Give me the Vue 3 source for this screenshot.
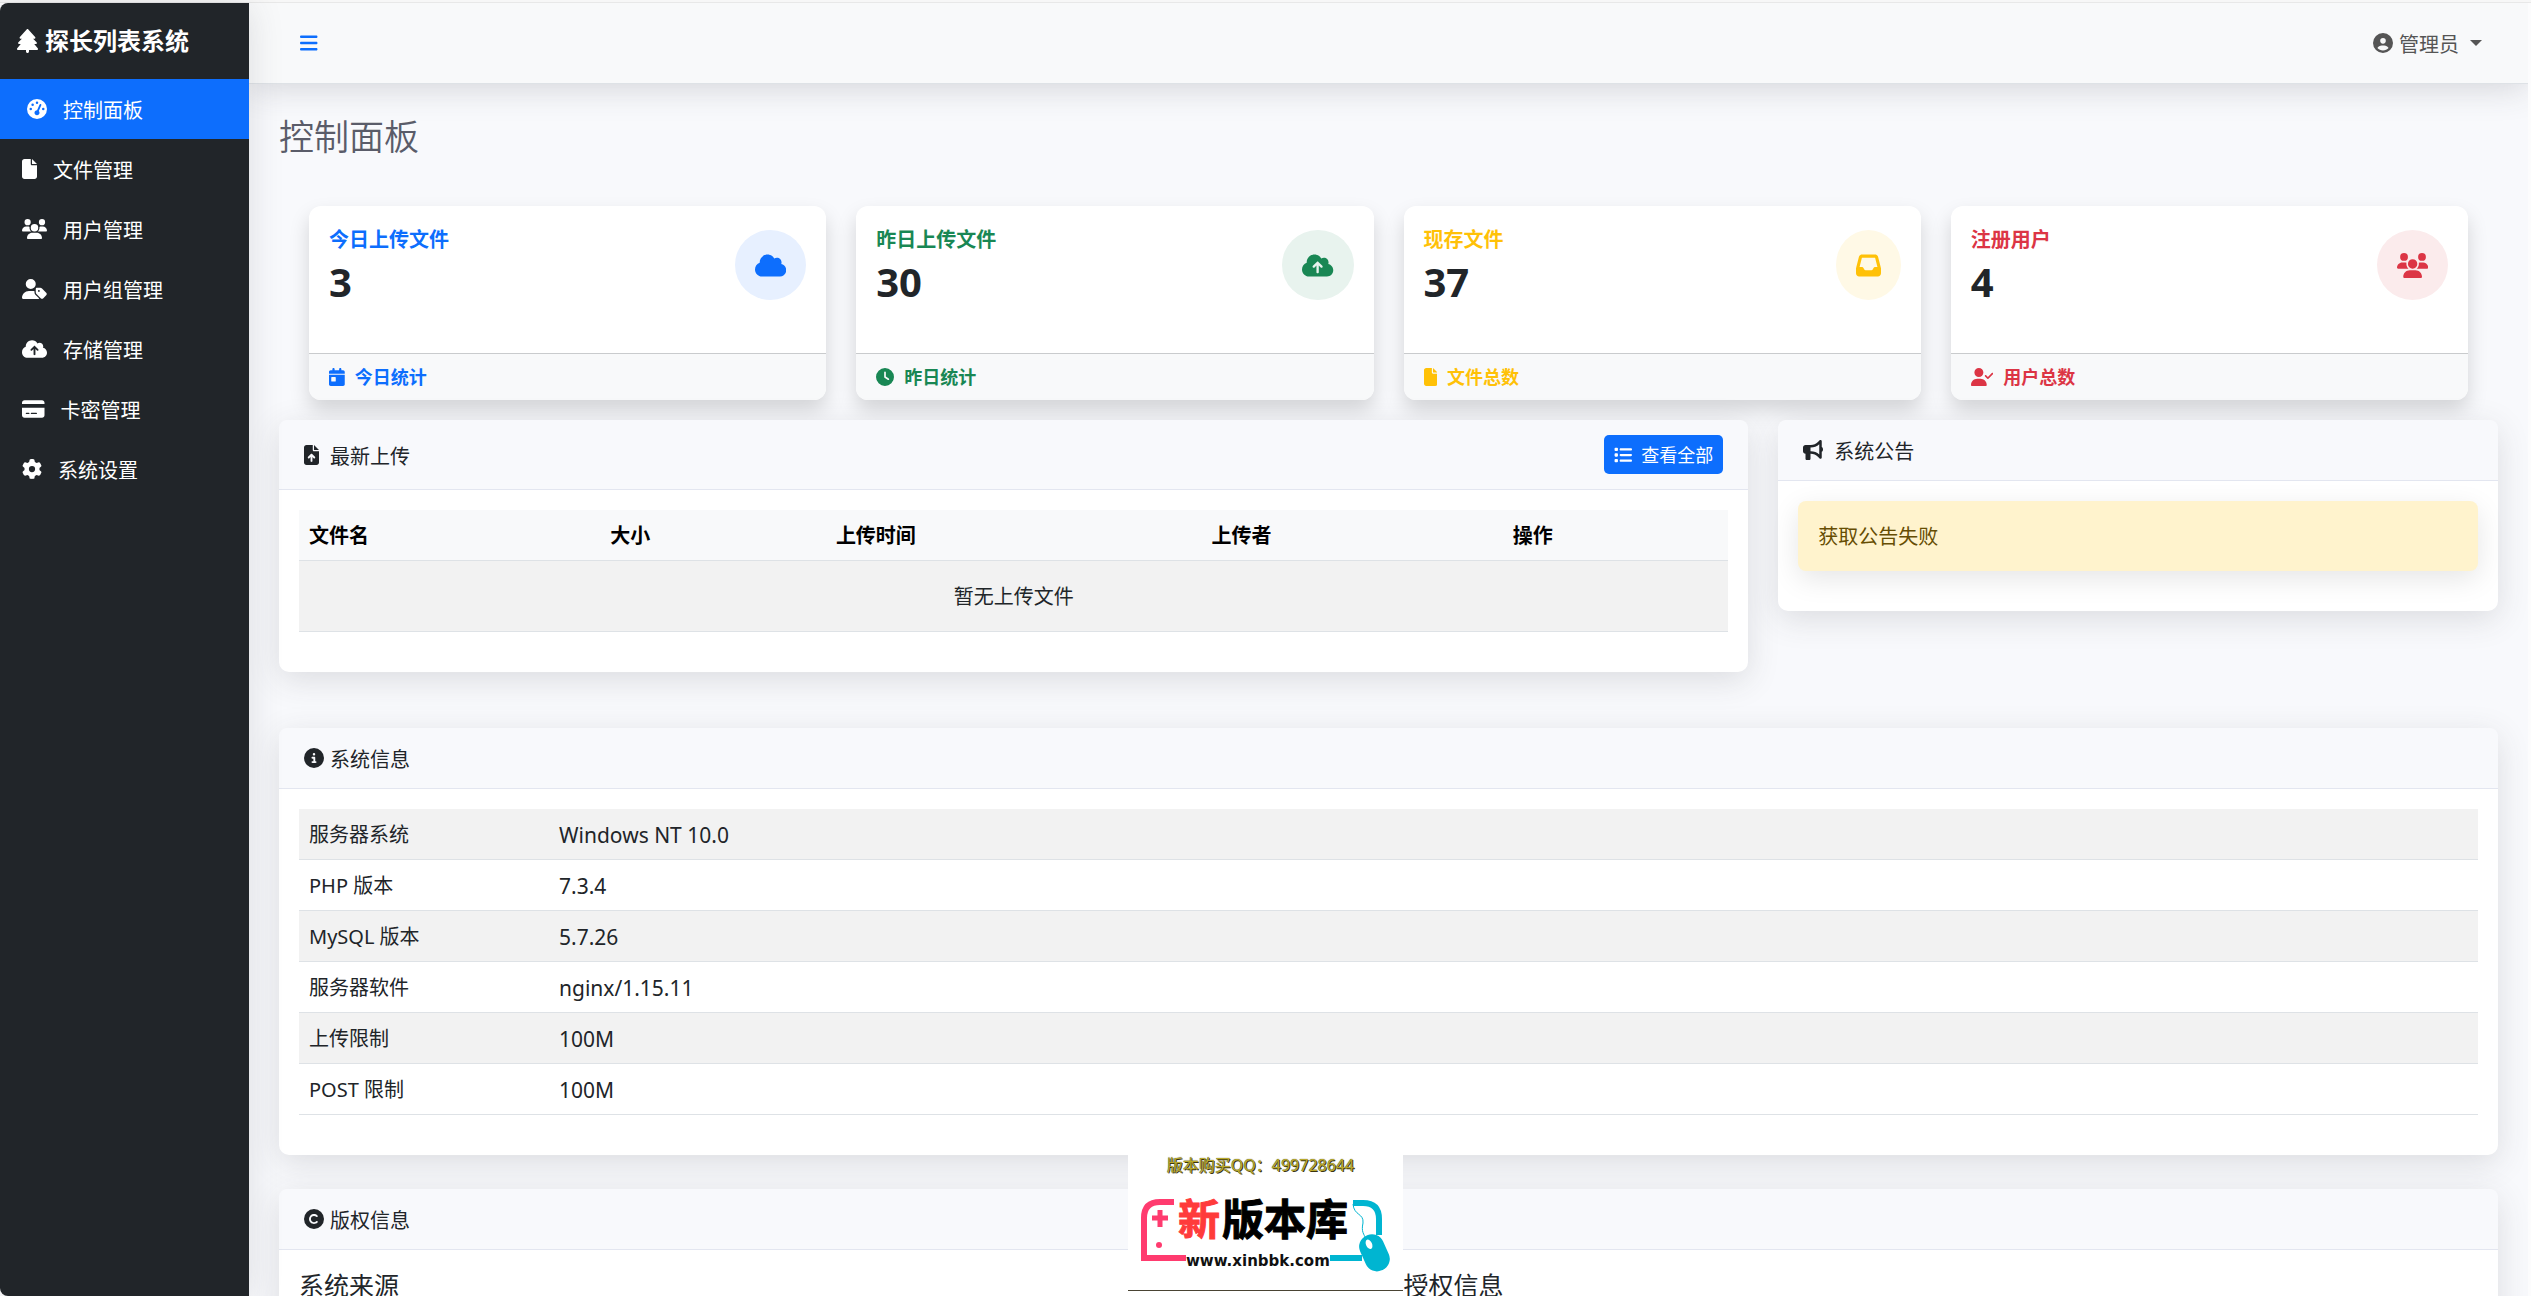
<template>
  <div class="app">
    <div class="window-edge"></div>
    <div class="shell">
      <!-- Боковое меню -->
      <aside class="sidebar">
        <a href="#" class="brand"><Icon name="tree" /><span>探长列表系统</span></a>
        <nav>
          <a
            v-for="item in menu"
            :key="item.text"
            href="#"
            class="menu-item"
            :class="{ active: item.text === current }"
            @click.prevent="current = item.text"
          >
            <Icon :name="item.icon" />
            <span>{{ item.text }}</span>
          </a>
        </nav>
      </aside>

      <main class="main">
        <header class="topbar">
          <button class="btn-toggle" aria-label="菜单"><Icon name="bars" /></button>
          <button class="btn-user">
            <Icon name="user" />
            <span>管理员</span>
            <i class="caret"></i>
          </button>
        </header>

        <div class="content">
          <h1>控制面板</h1>

          <!-- Статистика -->
          <section class="stats">
            <div v-for="s in stats" :key="s.title" class="stat" :class="s.color">
              <div class="stat-body">
                <div>
                  <div class="stat-title">{{ s.title }}</div>
                  <div class="stat-value">{{ s.value }}</div>
                </div>
                <div class="stat-icon"><Icon :name="s.icon" /></div>
              </div>
              <div class="stat-footer"><Icon :name="s.footIcon" /><span>{{ s.foot }}</span></div>
            </div>
          </section>

          <div class="row">
            <div class="col-wide">
              <section class="panel">
                <div class="panel-header uploads-header">
                  <Icon name="fileUp" class="gap-wide" /><span>最新上传</span>
                  <button class="btn-all"><Icon name="list" /><span>查看全部</span></button>
                </div>
                <div class="panel-body">
                  <table class="uploads">
                    <thead>
                      <tr><th v-for="c in columns" :key="c">{{ c }}</th></tr>
                    </thead>
                    <tbody>
                      <tr><td :colspan="columns.length">暂无上传文件</td></tr>
                    </tbody>
                  </table>
                </div>
              </section>
            </div>
            <div class="col-narrow">
              <section class="panel">
                <div class="panel-header"><Icon name="bullhorn" class="gap-wide" /><span>系统公告</span></div>
                <div class="panel-body">
                  <div class="alert">获取公告失败</div>
                </div>
              </section>
            </div>
          </div>

          <section class="panel system">
            <div class="panel-header"><Icon name="info" /><span>系统信息</span></div>
            <div class="panel-body">
              <table class="info">
                <tbody>
                  <tr v-for="r in info" :key="r[0]">
                    <th scope="row">{{ r[0] }}</th>
                    <td>{{ r[1] }}</td>
                  </tr>
                </tbody>
              </table>
            </div>
          </section>

          <section class="panel">
            <div class="panel-header"><Icon name="copyright" /><span>版权信息</span></div>
            <div class="panel-body copy">
              <h5>系统来源</h5>
              <h5>授权信息</h5>
            </div>
          </section>
        </div>
      </main>
    </div>

    <!-- Плавающий баннер поверх страницы -->
    <a href="#" class="banner">
      <span class="banner-qq">版本购买QQ：499728644</span>
      <svg class="banner-logo" viewBox="0 27 275 110">
        <g fill="none" stroke="#ff3b6f" stroke-width="6">
          <path d="M46 49H32Q16 49 16 65V105H58" />
          <path d="M24 65H40M32 57V74" stroke-width="5" />
        </g>
        <circle cx="31" cy="92" r="3" fill="#ff3b6f" />
        <text x="50" y="82" class="logo-text logo-red">新</text>
        <text x="94" y="82" class="logo-text">版本库</text>
        <text x="58" y="113" class="logo-url">www.xinbbk.com</text>
        <g fill="none" stroke="#00b5d1">
          <path d="M225 50H235Q251 50 251 66V82M202 105H234" stroke-width="6" />
          <path d="M225 51C226 63 236 60 235 70C233 79 236 81 238 86" stroke-width="1" />
        </g>
        <g transform="rotate(-24 246 100)">
          <rect x="234" y="81" width="25" height="38" rx="12" fill="#00b5d1" />
          <ellipse cx="245" cy="90" rx="3" ry="5" fill="#fff" />
        </g>
      </svg>
    </a>
  </div>
</template>

<script setup>
import { ref, h } from 'vue'

const current = ref('控制面板')

// [ширина viewBox, контур]
const icons = {
  tree: [448, 'M210.6 5.9L62 169.4c-3.9 4.2-6 9.8-6 15.5C56 197.7 66.3 208 79.1 208H104L30.6 281.4c-4.2 4.2-6.6 10-6.6 16C24 309.9 34.1 320 46.6 320H80L5.4 409.5C1.9 413.7 0 419 0 424.5c0 13 10.5 23.5 23.5 23.5H192v32c0 17.7 14.3 32 32 32s32-14.3 32-32V448H424.5c13 0 23.5-10.5 23.5-23.5c0-5.5-1.9-10.8-5.4-15L368 320h33.4c12.5 0 22.6-10.1 22.6-22.6c0-6-2.4-11.8-6.6-16L344 208h24.9c12.7 0 23.1-10.3 23.1-23.1c0-5.7-2.1-11.3-6-15.5L237.4 5.9C234 2.1 229.1 0 224 0s-10 2.1-13.4 5.9z'],
  gauge: [512, 'M0 256a256 256 0 1 1 512 0A256 256 0 1 1 0 256zM288 96a32 32 0 1 0 -64 0 32 32 0 1 0 64 0zM256 416c35.3 0 64-28.7 64-64c0-17.4-6.9-33.1-18.1-44.6L366 161.7c5.3-12.1-.2-26.3-12.3-31.6s-26.3 .2-31.6 12.3L257.9 288c-.6 0-1.3 0-1.9 0c-35.3 0-64 28.7-64 64s28.7 64 64 64zM176 144a32 32 0 1 0 -64 0 32 32 0 1 0 64 0zM96 288a32 32 0 1 0 0-64 32 32 0 1 0 0 64zm352-32a32 32 0 1 0 -64 0 32 32 0 1 0 64 0z'],
  file: [384, 'M0 64C0 28.7 28.7 0 64 0H224V128c0 17.7 14.3 32 32 32H384V448c0 35.3-28.7 64-64 64H64c-35.3 0-64-28.7-64-64V64zm384 64H256V0L384 128z'],
  fileUp: [384, 'M64 0C28.7 0 0 28.7 0 64V448c0 35.3 28.7 64 64 64H320c35.3 0 64-28.7 64-64V160H256c-17.7 0-32-14.3-32-32V0H64zM256 0V128H384L256 0zM216 408c0 13.3-10.7 24-24 24s-24-10.7-24-24V305.9l-31 31c-9.4 9.4-24.6 9.4-33.9 0s-9.4-24.6 0-33.9l72-72c9.4-9.4 24.6-9.4 33.9 0l72 72c9.4 9.4 9.4 24.6 0 33.9s-24.6 9.4-33.9 0l-31-31V408z'],
  users: [640, 'M144 0a80 80 0 1 1 0 160A80 80 0 1 1 144 0zM512 0a80 80 0 1 1 0 160A80 80 0 1 1 512 0zM0 298.7C0 239.8 47.8 192 106.7 192h42.7c15.9 0 31 3.5 44.6 9.7c-1.3 7.2-1.9 14.7-1.9 22.3c0 38.2 16.8 72.5 43.3 96c-.2 0-.4 0-.7 0H21.3C9.6 320 0 310.4 0 298.7zM405.3 320c-.2 0-.4 0-.7 0c26.6-23.5 43.3-57.8 43.3-96c0-7.6-.7-15-1.9-22.3c13.6-6.3 28.7-9.7 44.6-9.7h42.7C592.2 192 640 239.8 640 298.7c0 11.8-9.6 21.3-21.3 21.3H405.3zM224 224a96 96 0 1 1 192 0 96 96 0 1 1 -192 0zM128 485.3C128 411.7 187.7 352 261.3 352H378.7C452.3 352 512 411.7 512 485.3c0 14.7-11.9 26.7-26.7 26.7H154.7c-14.7 0-26.7-11.9-26.7-26.7z'],
  userTag: [640, 'M224 256A128 128 0 1 0 224 0a128 128 0 1 0 0 256zm-45.7 48C79.8 304 0 383.8 0 482.3C0 498.7 13.3 512 29.7 512H418.3c10 0 18.8-4.9 24.2-12.5l-99.2-99.2c-14.9-14.9-23.3-35.1-23.3-56.1v-33c-15.9-4.7-32.8-7.2-50.3-7.2H178.3zM384 224c-17.7 0-32 14.3-32 32v82.7c0 17 6.7 33.3 18.7 45.3L478.1 491.3c18.7 18.7 49.1 18.7 67.9 0l73.4-73.4c18.7-18.7 18.7-49.1 0-67.9L512 242.7c-12-12-28.3-18.7-45.3-18.7H384zm24 80a24 24 0 1 1 48 0 24 24 0 1 1 -48 0z'],
  userCheck: [640, 'M96 128a128 128 0 1 1 256 0A128 128 0 1 1 96 128zM0 482.3C0 383.8 79.8 304 178.3 304h91.4C368.2 304 448 383.8 448 482.3c0 16.4-13.3 29.7-29.7 29.7H29.7C13.3 512 0 498.7 0 482.3zM625 177L497 305c-9.4 9.4-24.6 9.4-33.9 0l-64-64c-9.4-9.4-9.4-24.6 0-33.9s24.6-9.4 33.9 0l47 47L591 143c9.4-9.4 24.6-9.4 33.9 0s9.4 24.6 0 33.9z'],
  cloud: [640, 'M0 336c0 79.5 64.5 144 144 144H512c70.7 0 128-57.3 128-128c0-61.9-44-113.6-102.4-125.4c4.1-10.7 6.4-22.4 6.4-34.6c0-53-43-96-96-96c-19.7 0-38.1 6-53.3 16.2C367 64.2 315.3 32 256 32C167.6 32 96 103.6 96 192c0 2.7 .1 5.4 .2 8.1C40.2 219.8 0 273.2 0 336z'],
  cloudUp: [640, 'M144 480C64.5 480 0 415.5 0 336c0-62.8 40.2-116.2 96.2-135.9c-.1-2.7-.2-5.4-.2-8.1c0-88.4 71.6-160 160-160c59.3 0 111 32.2 138.7 80.2C409.9 102 428.3 96 448 96c53 0 96 43 96 96c0 12.2-2.3 23.8-6.4 34.6C596 238.4 640 290.1 640 352c0 70.7-57.3 128-128 128H144zm79-217c-9.4 9.4-9.4 24.6 0 33.9s24.6 9.4 33.9 0l39-39V392c0 13.3 10.7 24 24 24s24-10.7 24-24V257.9l39 39c9.4 9.4 24.6 9.4 33.9 0s9.4-24.6 0-33.9l-80-80c-9.4-9.4-24.6-9.4-33.9 0l-80 80z'],
  card: [576, 'M64 32C28.7 32 0 60.7 0 96v32H576V96c0-35.3-28.7-64-64-64H64zM576 224H0V416c0 35.3 28.7 64 64 64H512c35.3 0 64-28.7 64-64V224zM112 352h64c8.8 0 16 7.2 16 16s-7.2 16-16 16H112c-8.8 0-16-7.2-16-16s7.2-16 16-16zm112 16c0-8.8 7.2-16 16-16H368c8.8 0 16 7.2 16 16s-7.2 16-16 16H240c-8.8 0-16-7.2-16-16z'],
  gear: [512, 'M495.9 166.6c3.2 8.7 .5 18.4-6.4 24.6l-43.3 39.4c1.1 8.3 1.7 16.8 1.7 25.4s-.6 17.1-1.7 25.4l43.3 39.4c6.9 6.2 9.6 15.9 6.4 24.6c-4.4 11.9-9.7 23.3-15.8 34.3l-4.7 8.1c-6.6 11-14 21.4-22.1 31.2c-5.9 7.2-15.7 9.6-24.5 6.8l-55.7-17.7c-13.4 10.3-28.2 18.9-44 25.4l-12.5 57.1c-2 9.1-9 16.3-18.2 17.8c-13.8 2.3-28 3.5-42.5 3.5s-28.7-1.2-42.5-3.5c-9.2-1.5-16.2-8.7-18.2-17.8l-12.5-57.1c-15.8-6.5-30.6-15.1-44-25.4L83.1 425.9c-8.8 2.8-18.6 .3-24.5-6.8c-8.1-9.8-15.5-20.2-22.1-31.2l-4.7-8.1c-6.1-11-11.4-22.4-15.8-34.3c-3.2-8.7-.5-18.4 6.4-24.6l43.3-39.4C64.6 273.1 64 264.6 64 256s.6-17.1 1.7-25.4L22.4 191.2c-6.9-6.2-9.6-15.9-6.4-24.6c4.4-11.9 9.7-23.3 15.8-34.3l4.7-8.1c6.6-11 14-21.4 22.1-31.2c5.9-7.2 15.7-9.6 24.5-6.8l55.7 17.7c13.4-10.3 28.2-18.9 44-25.4l12.5-57.1c2-9.1 9-16.3 18.2-17.8C227.3 1.2 241.5 0 256 0s28.7 1.2 42.5 3.5c9.2 1.5 16.2 8.7 18.2 17.8l12.5 57.1c15.8 6.5 30.6 15.1 44 25.4l55.7-17.7c8.8-2.8 18.6-.3 24.5 6.8c8.1 9.8 15.5 20.2 22.1 31.2l4.7 8.1c6.1 11 11.4 22.4 15.8 34.3zM256 336a80 80 0 1 0 0-160 80 80 0 1 0 0 160z'],
  bars: [448, 'M0 96C0 78.3 14.3 64 32 64H416c17.7 0 32 14.3 32 32s-14.3 32-32 32H32C14.3 128 0 113.7 0 96zM0 256c0-17.7 14.3-32 32-32H416c17.7 0 32 14.3 32 32s-14.3 32-32 32H32c-17.7 0-32-14.3-32-32zM448 416c0 17.7-14.3 32-32 32H32c-17.7 0-32-14.3-32-32s14.3-32 32-32H416c17.7 0 32 14.3 32 32z'],
  user: [512, 'M399 384.2C376.9 345.8 335.4 320 288 320H224c-47.4 0-88.9 25.8-111 64.2c35.2 39.2 86.2 63.8 143 63.8s107.8-24.7 143-63.8zM0 256a256 256 0 1 1 512 0A256 256 0 1 1 0 256zm256 16a72 72 0 1 0 0-144 72 72 0 1 0 0 144z'],
  inbox: [512, 'M121 32C91.6 32 66 52 58.9 80.5L1.9 308.4C.6 313.5 0 318.7 0 323.9V416c0 35.3 28.7 64 64 64H448c35.3 0 64-28.7 64-64V323.9c0-5.2-.6-10.4-1.9-15.5l-57-227.9C446 52 420.4 32 391 32H121zm0 64H391l48 192H387.8c-12.1 0-23.2 6.8-28.6 17.7l-14.3 28.6c-5.4 10.8-16.5 17.7-28.6 17.7H195.8c-12.1 0-23.2-6.8-28.6-17.7l-14.3-28.6c-5.4-10.8-16.5-17.7-28.6-17.7H73L121 96z'],
  calendar: [448, 'M128 0c17.7 0 32 14.3 32 32V64H288V32c0-17.7 14.3-32 32-32s32 14.3 32 32V64h48c26.5 0 48 21.5 48 48v48H0V112C0 85.5 21.5 64 48 64H96V32c0-17.7 14.3-32 32-32zM0 192H448V464c0 26.5-21.5 48-48 48H48c-26.5 0-48-21.5-48-48V192zm80 64c-8.8 0-16 7.2-16 16v96c0 8.8 7.2 16 16 16h96c8.8 0 16-7.2 16-16V272c0-8.8-7.2-16-16-16H80z'],
  clock: [512, 'M256 0a256 256 0 1 1 0 512A256 256 0 1 1 256 0zM232 120V256c0 8 4 15.5 10.7 20l96 64c11 7.4 25.9 4.4 33.3-6.7s4.4-25.9-6.7-33.3L280 243.2V120c0-13.3-10.7-24-24-24s-24 10.7-24 24z'],
  bullhorn: [512, 'M480 32c0-12.9-7.8-24.6-19.8-29.6s-25.7-2.2-34.9 6.9L381.7 53c-48 48-113.1 75-181 75H192 160 64c-35.3 0-64 28.7-64 64v96c0 35.3 28.7 64 64 64l0 128c0 17.7 14.3 32 32 32h64c17.7 0 32-14.3 32-32V352l8.7 0c67.9 0 133 27 181 75l43.6 43.6c9.2 9.2 22.9 11.9 34.9 6.9s19.8-16.6 19.8-29.6V300.4c18.6-8.8 32-32.5 32-60.4s-13.4-51.6-32-60.4V32zm-64 76.7V240 371.3C357.2 317.8 280.5 288 200.7 288H192V192h8.7c79.8 0 156.5-29.8 215.3-83.3z'],
  list: [512, 'M40 48C26.7 48 16 58.7 16 72v48c0 13.3 10.7 24 24 24H88c13.3 0 24-10.7 24-24V72c0-13.3-10.7-24-24-24H40zM192 64c-17.7 0-32 14.3-32 32s14.3 32 32 32H480c17.7 0 32-14.3 32-32s-14.3-32-32-32H192zm0 160c-17.7 0-32 14.3-32 32s14.3 32 32 32H480c17.7 0 32-14.3 32-32s-14.3-32-32-32H192zm0 160c-17.7 0-32 14.3-32 32s14.3 32 32 32H480c17.7 0 32-14.3 32-32s-14.3-32-32-32H192zM16 232v48c0 13.3 10.7 24 24 24H88c13.3 0 24-10.7 24-24V232c0-13.3-10.7-24-24-24H40c-13.3 0-24 10.7-24 24zM40 368c-13.3 0-24 10.7-24 24v48c0 13.3 10.7 24 24 24H88c13.3 0 24-10.7 24-24V392c0-13.3-10.7-24-24-24H40z'],
  info: [512, 'M256 512A256 256 0 1 0 256 0a256 256 0 1 0 0 512zM216 336h24V272H216c-13.3 0-24-10.7-24-24s10.7-24 24-24h48c13.3 0 24 10.7 24 24v88h8c13.3 0 24 10.7 24 24s-10.7 24-24 24H216c-13.3 0-24-10.7-24-24s10.7-24 24-24zm40-208a32 32 0 1 1 0 64 32 32 0 1 1 0-64z'],
  copyright: [512, 'M256 512A256 256 0 1 0 256 0a256 256 0 1 0 0 512zM199.4 312.6c31.2 31.2 81.9 31.2 113.1 0c9.4-9.4 24.6-9.4 33.9 0s9.4 24.6 0 33.9c-50 50-131 50-181 0s-50-131 0-181s131-50 181 0c9.4 9.4 9.4 24.6 0 33.9s-24.6 9.4-33.9 0c-31.2-31.2-81.9-31.2-113.1 0s-31.2 81.9 0 113.1z']
}

const Icon = (props) =>
  h('svg', { class: 'icon', viewBox: `0 0 ${icons[props.name][0]} 512`, 'aria-hidden': 'true' }, [
    h('path', { d: icons[props.name][1], fill: 'currentColor', 'fill-rule': 'evenodd' })
  ])
Icon.props = ['name']

const menu = [
  { icon: 'gauge', text: '控制面板' },
  { icon: 'file', text: '文件管理' },
  { icon: 'users', text: '用户管理' },
  { icon: 'userTag', text: '用户组管理' },
  { icon: 'cloudUp', text: '存储管理' },
  { icon: 'card', text: '卡密管理' },
  { icon: 'gear', text: '系统设置' }
]

const stats = [
  { title: '今日上传文件', value: 3, icon: 'cloud', footIcon: 'calendar', foot: '今日统计', color: 'blue' },
  { title: '昨日上传文件', value: 30, icon: 'cloudUp', footIcon: 'clock', foot: '昨日统计', color: 'green' },
  { title: '现存文件', value: 37, icon: 'inbox', footIcon: 'file', foot: '文件总数', color: 'yellow' },
  { title: '注册用户', value: 4, icon: 'users', footIcon: 'userCheck', foot: '用户总数', color: 'red' }
]

const columns = ['文件名', '大小', '上传时间', '上传者', '操作']

const info = [
  ['服务器系统', 'Windows NT 10.0'],
  ['PHP 版本', '7.3.4'],
  ['MySQL 版本', '5.7.26'],
  ['服务器软件', 'nginx/1.15.11'],
  ['上传限制', '100M'],
  ['POST 限制', '100M']
]
</script>

<style>
body {
  background: #fcfcfd;
  overflow: hidden;
}
</style>

<style scoped>
.app {
  display: flex;
  flex-direction: column;
  height: 100vh;
  font-family: "Noto Sans", "Noto Sans CJK SC", sans-serif;
  font-size: 20px;
  line-height: 30px;
  color: #212529;
}
.app * {
  box-sizing: border-box;
}
.window-edge {
  flex: none;
  height: 3px;
  background: #f7f7f7;
  border-bottom: 1px solid #e8e8e8;
}
.shell {
  display: flex;
  flex: 1;
  min-height: 0;
  padding-right: 3px;
}
.icon {
  height: 1em;
  flex: none;
  display: block;
}
a {
  color: inherit;
  text-decoration: none;
}
button {
  font: inherit;
  border: none;
  background: none;
  padding: 0;
  cursor: pointer;
}
/* текст рядом с иконкой чуть ниже её центра */
.menu-item span,
.btn-user span,
.panel-header > span {
  padding-top: 2px;
  margin-bottom: -2px;
}

/* sidebar */
.sidebar {
  position: relative;
  z-index: 1;
  flex: none;
  width: 249px;
  background: #212529;
  color: #fff;
  border-radius: 8px 0 0 8px;
  box-shadow: 0 3px 35px rgba(58, 59, 69, 0.15);
}
.brand {
  display: flex;
  align-items: center;
  gap: 7px;
  height: 76px;
  padding-left: 17px;
  font-size: 24px;
  font-weight: bold;
}
.menu-item {
  display: flex;
  align-items: center;
  gap: 16px;
  height: 60px;
  padding-left: 22px;
}
.menu-item.active {
  background: #0d6efd;
  padding-left: 27px;
}

/* topbar */
.main {
  flex: 1;
  min-width: 0;
  overflow: hidden;
  background: #f8f9fc;
}
.topbar {
  display: flex;
  align-items: center;
  justify-content: space-between;
  height: 81px;
  padding: 0 46px 0 51px;
  background: #f8f9fa;
  border-bottom: 1px solid #dee2e6;
  box-shadow: 0 3px 35px rgba(58, 59, 69, 0.2);
}
.btn-toggle {
  color: #0d6efd;
}
.btn-user {
  display: flex;
  align-items: center;
  gap: 6px;
  color: #555;
}
.caret {
  margin-left: 5px;
  border: 6px solid transparent;
  border-top-color: #555;
  border-bottom: 0;
}

.content {
  padding: 32px 30px;
}
h1 {
  margin: 0 0 48px;
  font-size: 35px;
  line-height: 42px;
  font-weight: 350;
  color: #5a5c69;
}

/* stats */
.stats {
  display: grid;
  grid-template-columns: repeat(4, 1fr);
  gap: 30px;
  padding: 0 30px;
  margin-bottom: 20px;
}
.stat {
  background: #fff;
  border-radius: 12px;
  overflow: hidden;
  box-shadow: 0 10px 20px rgba(0, 0, 0, 0.15);
}
.stat-body {
  display: flex;
  justify-content: space-between;
  align-items: flex-start;
  padding: 19px 20px 47px;
}
.stat-title {
  font-weight: bold;
  color: var(--c);
  margin-bottom: 3px;
}
.stat-value {
  font-size: 40px;
  line-height: 48px;
  font-weight: bold;
  font-family: "Open Sans", sans-serif;
}
.stat-icon {
  display: flex;
  align-items: center;
  height: 70px;
  margin-top: 5px;
  padding: 0 20px;
  border-radius: 50%;
  font-size: 25px;
  color: var(--c);
  background: var(--bg);
}
.stat-footer {
  display: flex;
  align-items: center;
  gap: 10px;
  padding: 8px 20px;
  background: #f8f9fa;
  border-top: 1px solid #c9cbcd;
  font-size: 18px;
  font-weight: bold;
  color: var(--c);
}
.blue {
  --c: #0d6efd;
  --bg: #e7f0ff;
}
.green {
  --c: #198754;
  --bg: #e8f3ee;
}
.yellow {
  --c: #ffc107;
  --bg: #fff9e6;
}
.red {
  --c: #dc3545;
  --bg: #fbebec;
}

/* panels */
.row {
  display: flex;
  align-items: flex-start;
  margin: 0 -15px 56px;
}
.col-wide,
.col-narrow {
  padding: 0 15px;
}
.col-wide {
  width: 66.6667%;
}
.col-narrow {
  width: 33.3333%;
}
.panel {
  background: #fff;
  border-radius: 10px;
  box-shadow: 0 8px 32px rgba(58, 59, 69, 0.15);
}
.panel.system {
  margin-bottom: 34px;
}
.panel-header {
  display: flex;
  align-items: center;
  gap: 6px;
  padding: 15px 25px;
  background: #f8f9fc;
  border-bottom: 1px solid #e3e6f0;
  border-radius: 8px 8px 0 0;
}
.gap-wide {
  margin-right: 5px;
}
.btn-all {
  display: flex;
  align-items: center;
  gap: 9px;
  height: 39px;
  margin-left: auto;
  padding: 0 10px;
  border-radius: 5px;
  background: #0d6efd;
  color: #fff;
  font-size: 18px;
}
.panel-body {
  padding: 20px 20px 40px;
}
table {
  width: 100%;
  border-collapse: separate;
  border-spacing: 0;
  table-layout: fixed;
}
th,
td {
  padding: 11px 10px 9px;
  text-align: left;
  border-bottom: 1px solid #dee2e6;
}
.uploads th {
  background: #f8f9fa;
  color: #000;
}
.uploads th:nth-child(odd) {
  width: 26.3%;
}
.uploads th:nth-child(1),
.uploads th:nth-child(4) {
  width: 21.1%;
}
.uploads th:nth-child(2),
.uploads th:nth-child(5) {
  width: 15.8%;
}
.uploads td {
  padding: 21px 20px 19px;
  text-align: center;
  background: #f2f2f2;
}
.info th {
  width: 250px;
  font-weight: normal;
}
.info td {
  font-size: 21px;
}
.info tr:nth-child(odd) > * {
  background: #f2f2f2;
}
.alert {
  padding: 21px 20px 19px;
  border-radius: 8px;
  background: #fff3cd;
  color: #664d03;
  box-shadow: 0 8px 28px rgba(0, 0, 0, 0.1);
}
.copy {
  display: grid;
  grid-template-columns: 1fr 1fr;
  column-gap: 30px;
}
h5 {
  margin: 0;
  font-size: 25px;
  line-height: 30px;
  font-weight: normal;
}

/* banner */
.banner {
  position: fixed;
  z-index: 2;
  bottom: 5px;
  left: 0;
  right: 0;
  width: 275px;
  margin: 0 auto;
  background: #fff;
  border-bottom: 1px solid #4a4434;
}
.banner-qq {
  display: block;
  height: 26px;
  padding-right: 10px;
  line-height: 22px;
  text-align: center;
  font-size: 16px;
  color: #b9a82c;
  text-shadow: 1px 1px 0 #3b3510, 0 0 1px #3b3510;
}
.banner-logo {
  display: block;
  width: 100%;
  height: 110px;
}
.logo-text {
  font: bold 42px "Noto Sans CJK SC", sans-serif;
  fill: #000;
  stroke: #000;
}
.logo-red {
  fill: #ff3b3b;
  stroke: #ff3b3b;
}
.logo-url {
  font: bold 15px "DejaVu Sans", sans-serif;
  fill: #111;
}
</style>
